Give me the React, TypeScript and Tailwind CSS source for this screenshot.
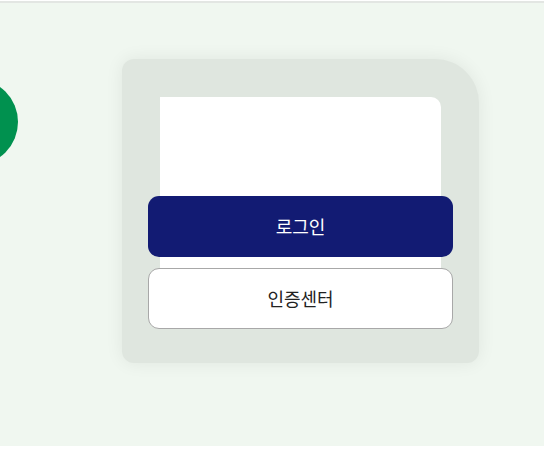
export default function App() {
  const font = { fontFamily: '"Noto Sans CJK KR", "Noto Sans", sans-serif' };
  return (
    <div className="w-[544px] h-[468px] bg-white overflow-hidden" style={font}>
      <div className="h-px bg-white" />
      <div className="h-[2px] bg-[#e3e6e3]" />
      <div className="h-[443px] bg-[#f0f7f0] flex items-start pt-[56px] overflow-hidden">
        <div className="ml-[-68px] mt-[20px] w-[86px] h-[86px] rounded-full bg-[#00914f] shrink-0" />
        <div className="ml-[104px] w-[357px] bg-[#dfe6df] rounded-tl-[12px] rounded-tr-[44px] rounded-b-[12px] shadow-[0_0_18px_rgba(0,0,0,0.07)] pt-[38px] px-[38px] pb-[34px] shrink-0">
          <div className="bg-white rounded-tr-[10px] pt-[99px] flex flex-col">
            <button className="-mx-3 h-[61px] rounded-[11px] bg-[#121b73] text-white text-[18px] flex items-center justify-center">
              로그인
            </button>
            <button className="-mx-3 mt-[11px] h-[61px] rounded-[11px] bg-white border border-[#a8a8a8] text-[#222] text-[18px] flex items-center justify-center">
              인증센터
            </button>
          </div>
        </div>
      </div>
    </div>
  );
}
